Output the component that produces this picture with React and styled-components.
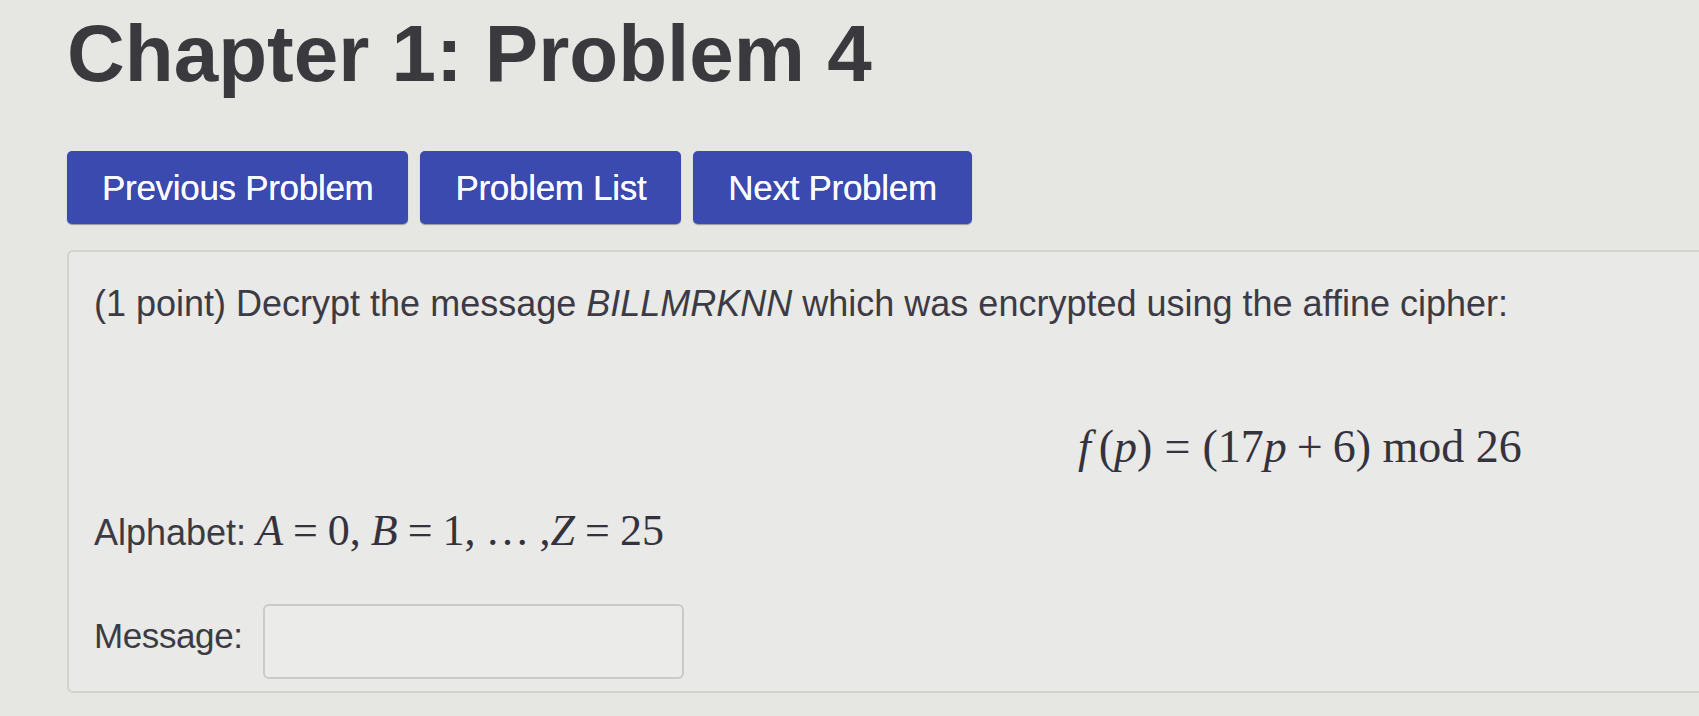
import styled, { createGlobalStyle } from "styled-components";

const GlobalStyle = createGlobalStyle`
  html, body {
    margin: 0;
    padding: 0;
    background: #e6e6e3;
    overflow: hidden;
  }
  body {
    font-family: "Liberation Sans", Arial, sans-serif;
    color: #3c3b45;
  }
`;

const Page = styled.div`
  padding: 12px 0 0 67px;
  height: 716px;
  box-sizing: border-box;
`;

const Title = styled.h1`
  margin: 0;
  font-size: 80px;
  line-height: 84px;
  font-weight: 700;
  color: #3a393e;
`;

const Nav = styled.div`
  display: flex;
  gap: 12px;
  margin-top: 55px;
`;

const NavButton = styled.button`
  height: 73px;
  padding: 0 35px;
  border: none;
  border-radius: 5px;
  background: #3b4aae;
  color: #fbfbff;
  font-family: "Liberation Sans", Arial, sans-serif;
  font-size: 35px;
  letter-spacing: -0.3px;
  text-shadow: 0 0 0.6px #fff;
  box-shadow: 0 1px 1px rgba(0, 0, 40, 0.35);
  cursor: pointer;
`;

const Panel = styled.div`
  margin-top: 26px;
  margin-right: -40px;
  height: 443px;
  box-sizing: border-box;
  padding: 31px 25px 0;
  background: #e9e9e7;
  border: 2px solid #d2d2cf;
  border-radius: 6px;
  display: flex;
  flex-direction: column;
`;

const Statement = styled.p`
  margin: 0;
  font-size: 36px;
  line-height: 41px;
  white-space: nowrap;
`;

const Equation = styled.div`
  margin-top: 93px;
  padding-left: 984px;
  font-family: "Liberation Serif", "Times New Roman", serif;
  font-size: 46px;
  line-height: 60px;
  white-space: nowrap;
  color: #34333d;
`;

const Var = styled.i`
  font-style: italic;
  margin-right: ${(p) => p.$gap || 0}px;
`;

const Op = styled.span`
  margin: 0 ${(p) => p.$space ?? 12}px;
`;

const Alphabet = styled.p`
  margin: 29px 0 0;
  font-size: 36px;
  line-height: 50px;
  white-space: nowrap;
`;

const InlineMath = styled.span`
  font-family: "Liberation Serif", "Times New Roman", serif;
  font-size: 44px;
  color: #34333d;
`;

const Sep = styled.span`
  margin-right: 10px;
`;

const AnswerRow = styled.div`
  display: flex;
  align-items: flex-start;
  gap: 20px;
  margin-top: 46px;
`;

const Label = styled.label`
  font-size: 35px;
  line-height: 41px;
  padding-top: 11px;
  letter-spacing: -0.4px;
`;

const AnswerInput = styled.input`
  width: 421px;
  height: 75px;
  box-sizing: border-box;
  border: 2px solid #cacac7;
  border-radius: 6px;
  background: #ebebe9;
  outline: none;
  font-size: 30px;
  padding: 0 12px;
`;

export default function App() {
  return (
    <>
      <GlobalStyle />
      <Page>
        <Title>Chapter 1: Problem 4</Title>
        <Nav>
          <NavButton>Previous Problem</NavButton>
          <NavButton>Problem List</NavButton>
          <NavButton>Next Problem</NavButton>
        </Nav>
        <Panel>
          <Statement>
            (1 point) Decrypt the message <i>BILLMRKNN</i> which was encrypted
            using the affine cipher:
          </Statement>
          <Equation>
            <Var $gap={8}>f</Var>(<Var>p</Var>)<Op $space={12}>=</Op>(17
            <Var>p</Var>
            <Op $space={10}>+</Op>6)<Op $space={0}> </Op>mod 26
          </Equation>
          <Alphabet>
            Alphabet:{" "}
            <InlineMath>
              <Var>A</Var>
              <Op $space={10}>=</Op>
              <Sep>0,</Sep>
              <Var>B</Var>
              <Op $space={10}>=</Op>
              <Sep>1,</Sep>
              <Sep>…</Sep>,<Var>Z</Var>
              <Op $space={10}>=</Op>25
            </InlineMath>
          </Alphabet>
          <AnswerRow>
            <Label htmlFor="answer">Message:</Label>
            <AnswerInput id="answer" type="text" />
          </AnswerRow>
        </Panel>
      </Page>
    </>
  );
}
